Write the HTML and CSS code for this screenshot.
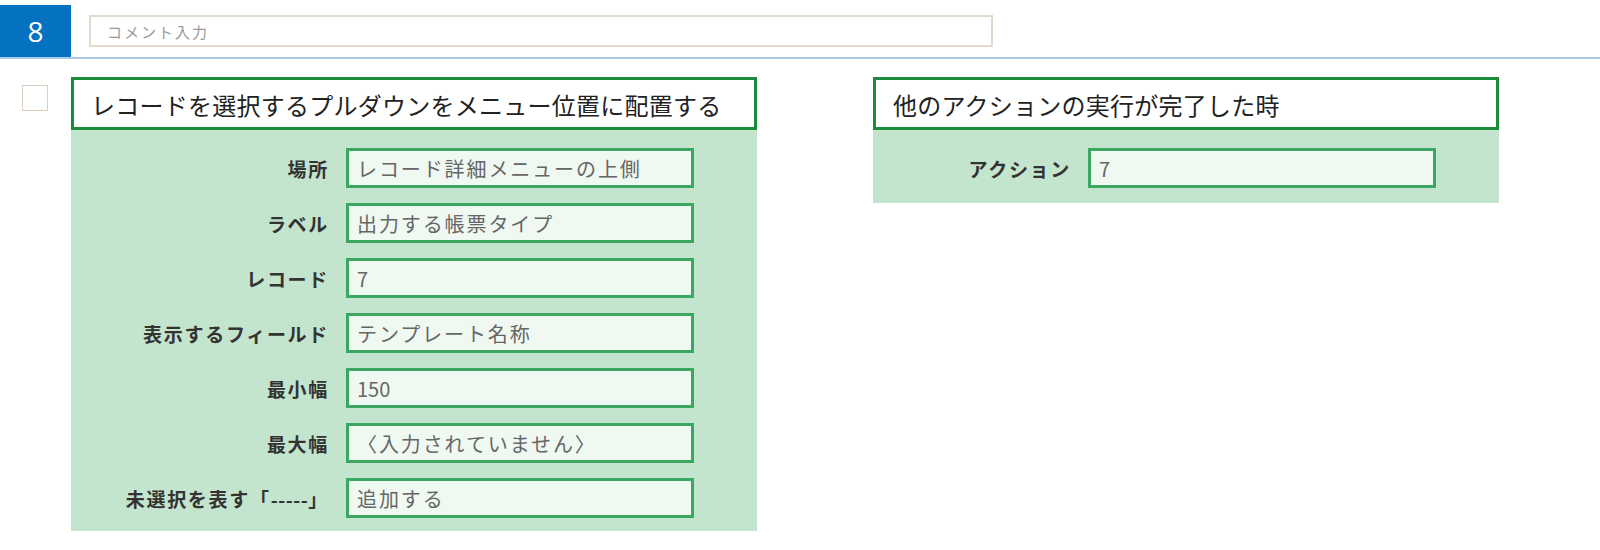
FILE: index.html
```html
<!DOCTYPE html>
<html lang="ja">
<head>
<meta charset="utf-8">
<link rel="stylesheet" href="styles.css">
</head>
<body>
<div class="header">
  <div class="badge">8</div>
  <div class="comment"><span class="placeholder">コメント入力</span></div>
</div>
<div class="main">
  <div class="checkbox"></div>
  <div class="card card-left">
    <div class="card-title">レコードを選択するプルダウンをメニュー位置に配置する</div>
    <div class="card-body">
      <div class="label">場所</div><div class="field">レコード詳細メニューの上側</div>
      <div class="label">ラベル</div><div class="field">出力する帳票タイプ</div>
      <div class="label">レコード</div><div class="field num">7</div>
      <div class="label">表示するフィールド</div><div class="field">テンプレート名称</div>
      <div class="label">最小幅</div><div class="field num">150</div>
      <div class="label">最大幅</div><div class="field">〈入力されていません〉</div>
      <div class="label">未選択を表す「<span class="dash">-----</span>」</div><div class="field">追加する</div>
    </div>
  </div>
  <div class="card card-right">
    <div class="card-title">他のアクションの実行が完了した時</div>
    <div class="card-body">
      <div class="label">アクション</div><div class="field num">7</div>
    </div>
  </div>
</div>
</body>
</html>
```

FILE: styles.css
```css
html, body {
  margin: 0;
  padding: 0;
  background: #ffffff;
  font-family: "Noto Sans CJK JP", "Noto Sans", sans-serif;
}

.header {
  display: flex;
  align-items: flex-start;
  height: 57px;
  border-bottom: 2px solid #a9cbe9;
}

.badge {
  width: 71px;
  height: 52px;
  margin-top: 5px;
  background: #0571c1;
  color: #ffffff;
  font-family: "Open Sans", "Liberation Sans", sans-serif;
  font-size: 28px;
  display: flex;
  align-items: center;
  justify-content: center;
}

.comment {
  margin-top: 15px;
  margin-left: 18px;
  width: 884px;
  height: 28px;
  border: 2px solid #e3d9cf;
  display: flex;
  align-items: center;
  padding-left: 16px;
}

.placeholder {
  color: #9a9a9a;
  font-size: 15px;
  letter-spacing: 2px;
}

.main {
  display: flex;
  align-items: flex-start;
  padding-top: 18px;
  padding-left: 22px;
}

.checkbox {
  width: 24px;
  height: 24px;
  margin-top: 8px;
  border: 1px solid #dccfc2;
  background: #ffffff;
}

.card-left {
  margin-left: 23px;
  width: 686px;
}

.card-right {
  margin-left: 116px;
  width: 626px;
}

.card-title {
  height: 47px;
  border: 3px solid #1c8b3b;
  background: #ffffff;
  color: #222222;
  font-size: 24px;
  letter-spacing: 0.25px;
  display: flex;
  align-items: center;
  padding-left: 17px;
  padding-top: 2px;
  box-sizing: content-box;
  height: 45px;
}

.card-body {
  background: #c4e5cd;
  display: grid;
  row-gap: 15px;
  column-gap: 18px;
  align-items: center;
  padding: 18px 0 13px 0;
}

.card-left .card-body {
  grid-template-columns: 257px 348px;
}

.card-right .card-body {
  grid-template-columns: 197px 348px;
  padding-bottom: 15px;
}

.label {
  text-align: right;
  font-weight: bold;
  font-size: 19px;
  letter-spacing: 1.7px;
  margin-right: -1px;
  color: #333333;
}

.dash {
  letter-spacing: 0.5px;
}

.field {
  height: 34px;
  border: 3px solid #3aa862;
  background: #eff8f1;
  color: #666666;
  font-size: 20px;
  letter-spacing: 1.9px;
  display: flex;
  align-items: center;
  padding-left: 8px;
}

.field.num {
  letter-spacing: 0;
}
```
